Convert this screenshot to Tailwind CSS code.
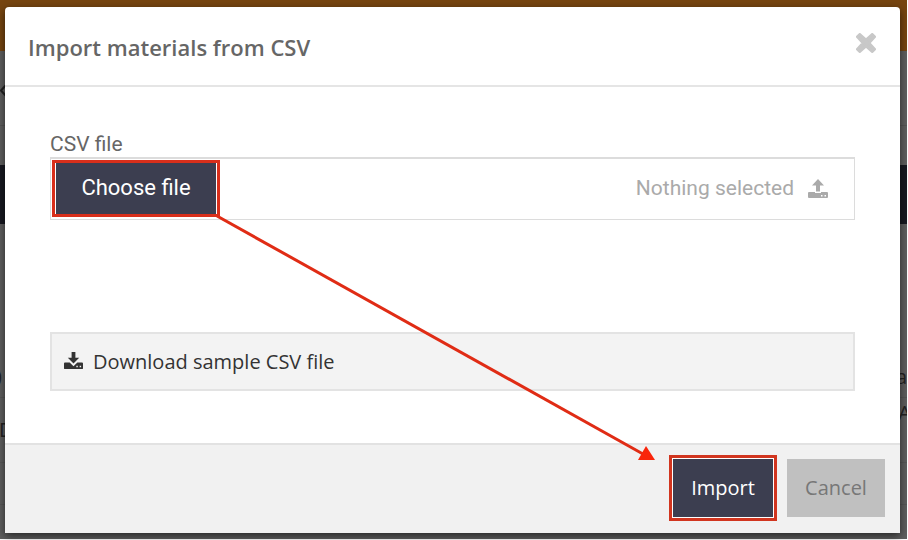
<!DOCTYPE html>
<html lang="en">
<head>
    <meta charset="UTF-8">
    <meta name="viewport" content="width=device-width, initial-scale=1.0">
    <title>Import materials from CSV</title>
    <script src="https://cdn.jsdelivr.net/npm/@tailwindcss/browser@4"></script>
</head>
<body class="relative min-h-screen overflow-hidden bg-white pr-px pb-px font-['Open_Sans',sans-serif] text-xl text-[#666]">

    <!-- Dimmed page behind the dialog -->
    <div class="absolute inset-0 mr-px mb-px flex flex-col overflow-hidden bg-[#5f5f5f] text-[#222]" aria-hidden="true">
        <div class="h-[51px] shrink-0 bg-[#764510]"></div>
        <div class="h-[75px] shrink-0 border-b border-[#555]"></div>
        <div class="h-[39px] shrink-0"></div>
        <div class="h-[59px] shrink-0 bg-[#171921]"></div>
        <div class="h-[174px] shrink-0 border-b border-[#575757]"></div>
        <div class="h-[65px] shrink-0 border-b border-[#575757]"></div>
        <div class="h-[42px] shrink-0 border-b border-[#575757]"></div>
        <div class="flex-1"></div>
        <svg class="absolute top-[83px] left-0 h-4 w-2" viewBox="0 0 8 16" fill="none" stroke="#222" stroke-width="2"><path d="M7 1L1 7.500L7 14"/></svg>
        <span class="absolute top-[362px] -left-1">)</span>
        <span class="absolute top-[416px] -left-px">D</span>
        <span class="absolute top-[363px] right-0">a</span>
        <span class="absolute top-[399px] -right-1">A</span>
    </div>

    <!-- Dialog -->
    <div role="dialog" aria-labelledby="dialog-title" class="relative mr-[7px] mt-[7px] ml-[5px] rounded-t bg-white shadow-[0_3px_8px_rgba(0,0,0,0.6)]">
        <header class="flex items-start justify-between border-b-2 border-[#e5e5e5] pt-6 pr-6 pb-[22px] pl-[23px]">
            <h1 id="dialog-title" class="text-[22px] leading-8 font-semibold">Import materials from CSV</h1>
            <button type="button" aria-label="Close" class="mt-[2px]">
                <svg class="size-5" viewBox="0 0 20 20"><path d="M1.500 3.800L3.800 1.500L10 7.200L16.200 1.500L18.500 3.800L12.800 10L18.500 16.200L16.200 18.500L10 12.800L3.800 18.500L1.500 16.200L7.200 10Z" fill="#c8c8c8" stroke="#c8c8c8" stroke-width="3" stroke-linejoin="round"/></svg>
            </button>
        </header>

        <div class="px-[45px] pt-11 pb-[52px]">
            <label for="csv" class="block font-[Roboto,sans-serif] text-[21px] leading-[26px]">CSV file</label>
            <div class="flex h-[63px] items-start justify-between border border-t-2 border-[#dcdcdc] px-px pt-px font-[Roboto,sans-serif]">
                <input type="file" id="csv" class="peer sr-only">
                <label for="csv" class="flex h-[57px] w-[168px] items-center justify-center border-[3px] border-[#d82f1b] px-px text-[22px] text-white">
                    <span class="flex h-full w-full items-center justify-center bg-[#3c3e50]">Choose file</span>
                </label>
                <span class="flex h-[57px] items-center gap-[14px] pr-[25px] text-[21px] text-[#aaa]">
                    Nothing selected
                    <svg class="size-5" viewBox="0 0 20 20" fill="#aaa"><path d="M10 0L16 6.500H12V12.500H8V6.500H4Z"/><path fill-rule="evenodd" d="M1 13H7V14H13V13H19Q20 13 20 14V18Q20 19 19 19H1Q0 19 0 18V14Q0 13 1 13ZM13 16V17.500H14.500V16ZM16.500 16V17.500H18V16Z"/></svg>
                </span>
            </div>

            <a href="#" class="mt-[112px] flex h-[59px] items-center gap-[10px] border-2 border-[#e3e3e3] bg-[#f3f3f3] px-3 text-[#333]">
                <svg class="size-[19px]" viewBox="0 0 20 20" fill="#333"><path d="M8 0H12V6H16L10 12L4 6H8Z"/><path fill-rule="evenodd" d="M1 11H6L10 15L14 11H19Q20 11 20 12V17Q20 18 19 18H1Q0 18 0 17V12Q0 11 1 11ZM13 14.500V16H14.500V14.500ZM16.500 14.500V16H18V14.500Z"/></svg>
                Download sample CSV file
            </a>
        </div>

        <footer class="flex items-center justify-end gap-[10px] border-t-2 border-[#e2e2e2] bg-[#f1f1f1] pt-[10px] pr-[15px] pb-3">
            <button type="button" class="h-[66px] w-[108px] border-[3px] border-[#d1351f] bg-white p-px text-white">
                <span class="flex h-full w-full items-center justify-center bg-[#3c3e50]">Import</span>
            </button>
            <button type="button" class="h-[58px] w-[98px] bg-[#c0c0c0] text-[#777]">Cancel</button>
        </footer>
    </div>

    <!-- Arrow from the file button to Import -->
    <svg class="pointer-events-none absolute top-0 left-0 h-[540px] w-[908px]" viewBox="0 0 908 540" aria-hidden="true">
        <path d="M217 216L643 454" stroke="#e02c15" stroke-width="3"/>
        <path d="M655 460L646 446L638 460Z" fill="#f9250b"/>
    </svg>
</body>
</html>
